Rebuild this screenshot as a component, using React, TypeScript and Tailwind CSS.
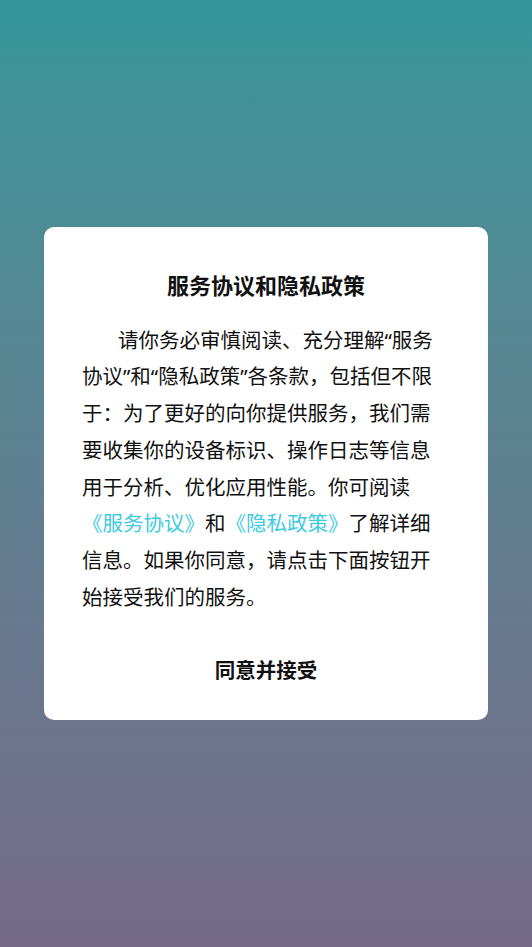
import React from "react";

export default function App() {
  // Latin font first so the curly quotes come out narrow, CJK falls through
  const font = { fontFamily: '"Noto Sans", "Noto Sans CJK SC", sans-serif' };
  return (
    <div
      className="flex h-[947px] w-full items-center justify-center bg-gradient-to-b from-[#339699] to-[#756a89] px-[44px]"
      style={font}
    >
      <div className="w-full rounded-[10px] bg-white px-[38px] pt-[43px] pb-[35px] text-[#111]">
        <h1 className="text-center text-[22px] font-bold leading-[30px]">服务协议和隐私政策</h1>
        <p className="mt-[22px] text-[20.5px] leading-[36.7px] indent-[36px]">
          请你务必审慎阅读、充分理解“服务协议”和“隐私政策”各条款，包括但不限于：为了更好的向你提供服务，我们需要收集你的设备标识、操作日志等信息用于分析、优化应用性能。你可阅读
          <span className="text-[#3ccbe0]">《服务协议》</span>和
          <span className="text-[#3ccbe0]">《隐私政策》</span>
          了解详细信息。如果你同意，请点击下面按钮开始接受我们的服务。
        </p>
        <button className="mt-[40px] block w-full text-center text-[20.5px] font-bold leading-[30px]">
          同意并接受
        </button>
      </div>
    </div>
  );
}
